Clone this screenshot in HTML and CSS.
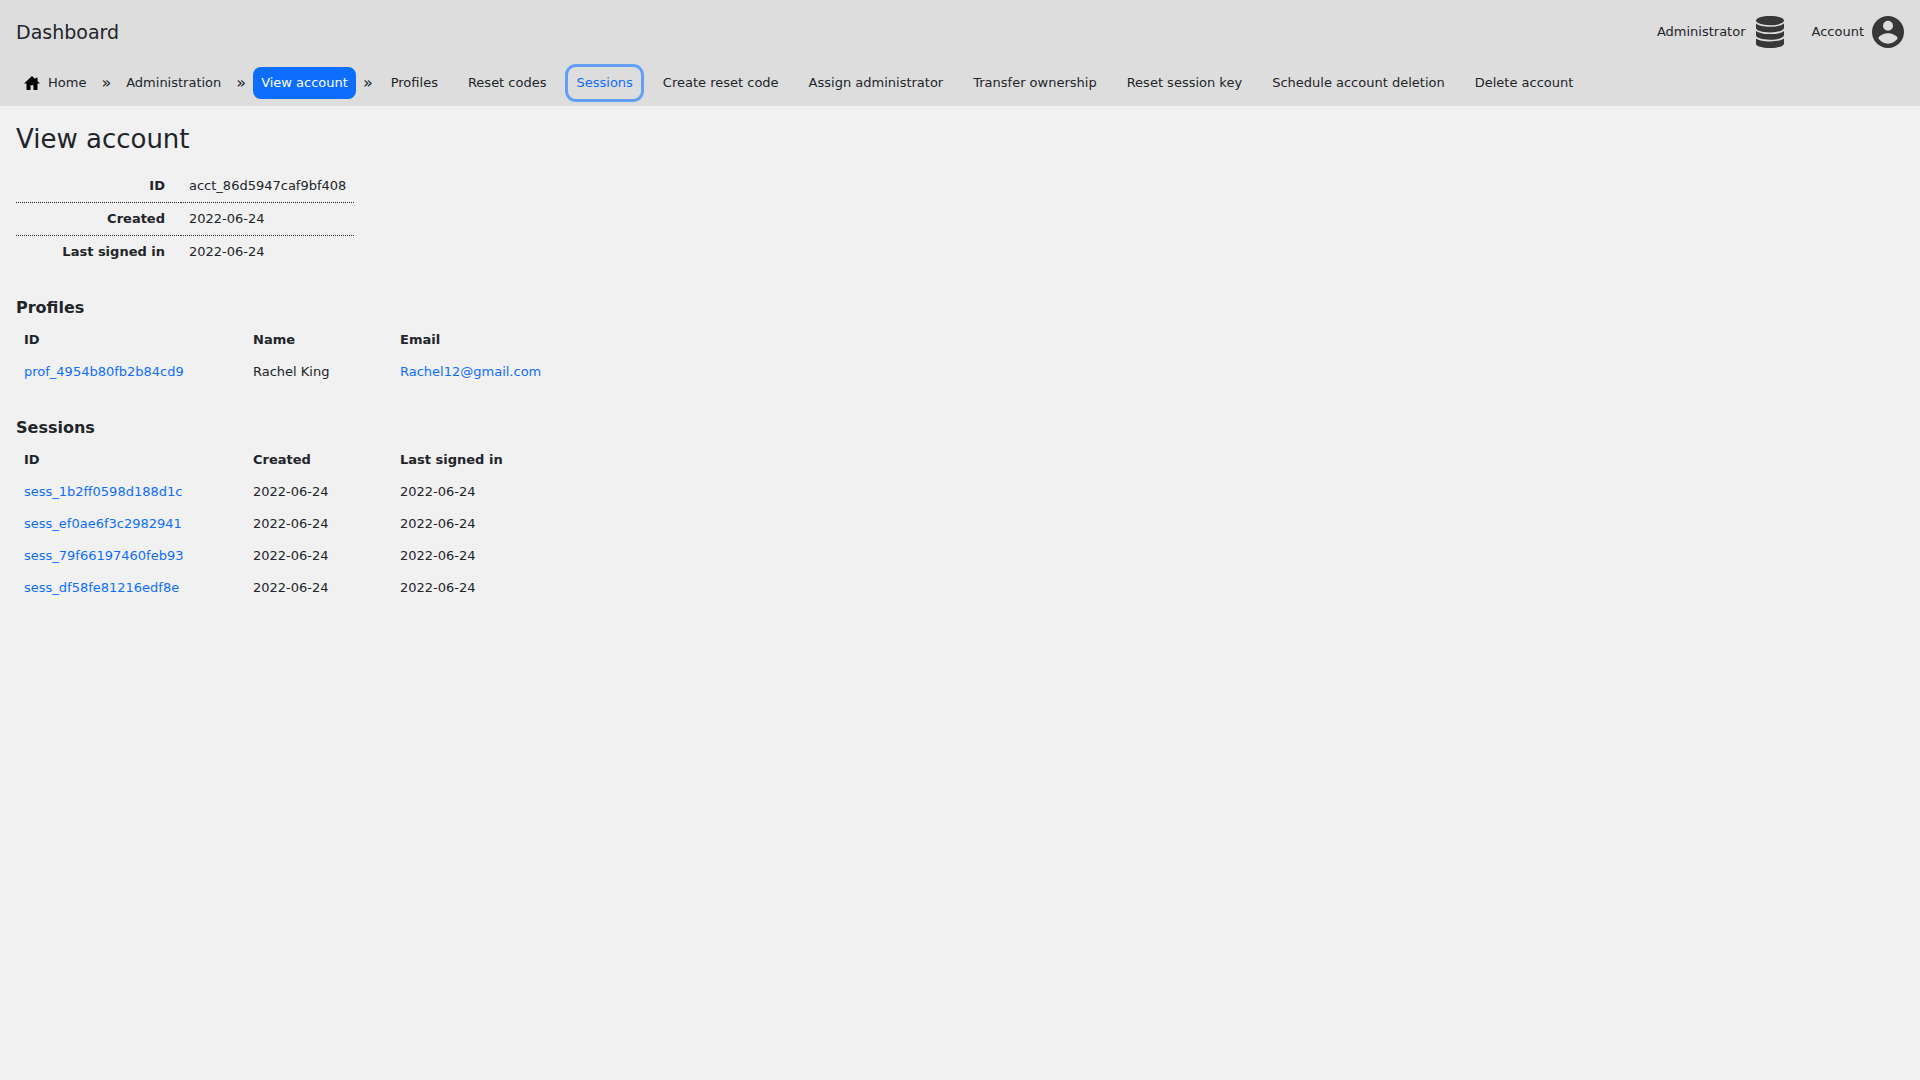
FILE: index.html
```html
<!DOCTYPE html>
<html lang="en">
<head>
<meta charset="utf-8">
<meta name="viewport" content="width=device-width, initial-scale=1">
<title>View account</title>
<link rel="stylesheet" href="styles.css">
</head>
<body>
<header class="header">
  <div class="topbar">
    <a class="brand" href="#">Dashboard</a>
    <nav class="menus" aria-label="Menus">
      <button class="menu" type="button">Administrator
        <svg class="menu-icon" viewBox="-2 0 32 32" aria-hidden="true">
          <path d="M14 0C6 0 0 2 0 4.600S6 9.200 14 9.200s14-2 14-4.600S22 0 14 0z"/>
          <path d="M0 7.400C2.500 9.600 8 10.700 14 10.700s11.500-1.100 14-3.300V12c0 2.400-6 4.400-14 4.400S0 14.400 0 12z"/>
          <path d="M0 15C2.500 17 8 18.100 14 18.100S25.500 17 28 15v4.300c0 2.400-6 4.400-14 4.400s-14-2-14-4.400z"/>
          <path d="M0 22.500C2.500 24.500 8 25.500 14 25.500s11.500-1 14-3v5.200C28 30.200 22 32 14 32S0 30.200 0 27.700z"/>
        </svg>
      </button>
      <button class="menu" type="button">Account
        <svg class="menu-icon" viewBox="0 0 32 32" aria-hidden="true">
          <path fill-rule="evenodd" d="M16 0a16 16 0 1 0 0 32 16 16 0 0 0 0-32zm0 4.800a5 5 0 1 1 0 10 5 5 0 0 1 0-10zM16 27.700c-4 0-7.500-2-9.600-5.100C6.500 19.200 12.800 17.300 16 17.300s9.500 1.900 9.600 5.300C23.500 25.700 20 27.700 16 27.700z"/>
        </svg>
      </button>
    </nav>
  </div>
  <nav class="navbar" aria-label="Account pages">
    <div class="crumbs">
      <a class="item" href="#"><svg class="home-icon" viewBox="0 0 16 16" aria-hidden="true"><path d="M8 1L0 8.400h2.500V15h4v-4.700h3V15h4V8.400H16l-2.500-2.300V2.800h-2v1.500z"/></svg>Home</a>
      <span class="separator">»</span>
      <a class="item" href="#">Administration</a>
      <span class="separator">»</span>
      <a class="item item-current" href="#" aria-current="page">View account</a>
      <span class="separator">»</span>
    </div>
    <div class="pages">
      <a class="item" href="#">Profiles</a>
      <a class="item" href="#">Reset codes</a>
      <a class="item item-focused" href="#">Sessions</a>
      <a class="item" href="#">Create reset code</a>
      <a class="item" href="#">Assign administrator</a>
      <a class="item" href="#">Transfer ownership</a>
      <a class="item" href="#">Reset session key</a>
      <a class="item" href="#">Schedule account deletion</a>
      <a class="item" href="#">Delete account</a>
    </div>
  </nav>
</header>
<main class="content">
  <h1 class="title">View account</h1>
  <table class="details">
    <tbody>
      <tr><th scope="row">ID</th><td>acct_86d5947caf9bf408</td></tr>
      <tr><th scope="row">Created</th><td>2022-06-24</td></tr>
      <tr><th scope="row">Last signed in</th><td>2022-06-24</td></tr>
    </tbody>
  </table>
  <section class="section">
    <h2 class="subtitle">Profiles</h2>
    <table class="list">
      <thead><tr><th scope="col">ID</th><th scope="col">Name</th><th scope="col">Email</th></tr></thead>
      <tbody>
        <tr><td><a href="#">prof_4954b80fb2b84cd9</a></td><td>Rachel King</td><td><a href="#">Rachel12@gmail.com</a></td></tr>
      </tbody>
    </table>
  </section>
  <section class="section">
    <h2 class="subtitle">Sessions</h2>
    <table class="list">
      <thead><tr><th scope="col">ID</th><th scope="col">Created</th><th scope="col">Last signed in</th></tr></thead>
      <tbody>
        <tr><td><a href="#">sess_1b2ff0598d188d1c</a></td><td>2022-06-24</td><td>2022-06-24</td></tr>
        <tr><td><a href="#">sess_ef0ae6f3c2982941</a></td><td>2022-06-24</td><td>2022-06-24</td></tr>
        <tr><td><a href="#">sess_79f66197460feb93</a></td><td>2022-06-24</td><td>2022-06-24</td></tr>
        <tr><td><a href="#">sess_df58fe81216edf8e</a></td><td>2022-06-24</td><td>2022-06-24</td></tr>
      </tbody>
    </table>
  </section>
</main>
</body>
</html>
```
FILE: styles.css
```css
* { box-sizing: border-box; }

body {
  margin: 0;
  background: #f1f1f1;
  color: #212529;
  font: 13px/16px "DejaVu Sans", sans-serif;
}

a { color: #0d6efd; text-decoration: none; }

.header { background: #ddd; padding: 0 16px 7px; }

.topbar {
  display: flex;
  align-items: center;
  justify-content: space-between;
  padding: 16px 0;
}

.brand { color: inherit; font-size: 19px; line-height: 32px; }

.menus { display: flex; gap: 26px; }

.menu {
  display: flex;
  align-items: center;
  gap: 8px;
  padding: 0;
  border: 0;
  background: none;
  color: inherit;
  font: inherit;
}

.menu-icon { width: 32px; height: 32px; fill: #373737; }

.navbar { display: flex; flex-wrap: wrap; gap: 10px; padding-top: 3px; }
.crumbs { display: flex; gap: 7px; }
.pages { display: flex; flex-wrap: wrap; gap: 14px; }

.item {
  display: flex;
  align-items: center;
  gap: 8px;
  height: 32px;
  padding: 0 8px;
  border-radius: 8px;
  color: inherit;
}

.item-current { background: #0d6efd; color: #fff; }
.item-focused { color: #0d6efd; box-shadow: 0 0 0 3px #629ffc; }

.home-icon { width: 16px; height: 16px; fill: #000; }
.separator { font-size: 16px; line-height: 32px; }

.content { padding: 16px; }

.title { margin: 0 0 14px; font-size: 26px; font-weight: 400; line-height: 34px; }

table { border-collapse: collapse; }

.details { margin-bottom: 28px; }
.details th, .details td { padding: 8px; }
.details th { width: 165px; padding-right: 16px; text-align: right; }
.details tr + tr > * { border-top: 1px dotted #212529; }

.section { margin-bottom: 28px; }
.subtitle { margin: 0 0 4px; font-size: 16px; line-height: 24px; }

.list { table-layout: fixed; }
.list th, .list td { padding: 8px; text-align: left; }
.list th:first-child { width: 229px; }
.list th:nth-child(2) { width: 147px; }
```
